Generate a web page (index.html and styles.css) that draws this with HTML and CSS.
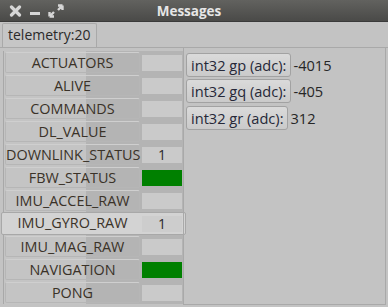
FILE: index.html
```html
<!DOCTYPE html>
<html lang="en">
<head>
  <meta charset="UTF-8">
  <title>Messages</title>
  <link rel="stylesheet" href="styles.css">
</head>
<body>
  <div class="window">
    <div class="titlebar">
      <div class="controls">
        <svg width="13" height="12" viewBox="0 0 13 12"><path d="M2.5 2 L10.5 10 M10.5 2 L2.5 10" stroke="#d6d6d6" stroke-width="3.2" stroke-linecap="round"/></svg>
        <svg width="12" height="12" viewBox="0 0 12 12"><rect x="1" y="7" width="10" height="3" fill="#d6d6d6"/></svg>
        <svg width="16" height="14" viewBox="0 0 16 14"><path d="M1.5 12.5 L6 8 M1.5 12.5 V8 M1.5 12.5 H6 M14.5 1.5 L10 6 M14.5 1.5 V6 M14.5 1.5 H10" stroke="#d6d6d6" stroke-width="2.4" fill="none"/></svg>
      </div>
      <div class="title">Messages</div>
    </div>

    <div class="tabbar">
      <div class="tab">telemetry:20</div>
    </div>

    <div class="content">
      <div class="msglist">
        <div class="row"><span class="name">ACTUATORS</span><span class="val"></span></div>
        <div class="row"><span class="name">ALIVE</span><span class="val"></span></div>
        <div class="row"><span class="name">COMMANDS</span><span class="val"></span></div>
        <div class="row"><span class="name">DL_VALUE</span><span class="val"></span></div>
        <div class="row"><span class="name">DOWNLINK_STATUS</span><span class="val">1</span></div>
        <div class="row"><span class="name">FBW_STATUS</span><span class="val green"></span></div>
        <div class="row"><span class="name">IMU_ACCEL_RAW</span><span class="val"></span></div>
        <div class="row selected"><span class="name">IMU_GYRO_RAW</span><span class="val">1</span></div>
        <div class="row"><span class="name">IMU_MAG_RAW</span><span class="val"></span></div>
        <div class="row"><span class="name">NAVIGATION</span><span class="val green"></span></div>
        <div class="row"><span class="name">PONG</span><span class="val"></span></div>
      </div>

      <div class="fields">
        <div class="field"><span class="fbtn">int32 gp (adc):</span><span class="fval">-4015</span></div>
        <div class="field"><span class="fbtn">int32 gq (adc):</span><span class="fval">-405</span></div>
        <div class="field"><span class="fbtn">int32 gr (adc):</span><span class="fval">312</span></div>
      </div>
    </div>
  </div>
</body>
</html>
```

FILE: styles.css
```css
body { margin: 0; background: #c3c3c3; font-family: "Open Sans", "DejaVu Sans", sans-serif; font-size: 13px; }
.window { width: 388px; height: 307px; display: flex; flex-direction: column; }

.titlebar { height: 21px; flex: none; display: flex; align-items: center; position: relative;
  background: linear-gradient(#62625f, #4a4a48); border-bottom: 1px solid #3a3a3a; }
.controls { display: flex; align-items: center; gap: 7px; padding-left: 9px; }
.title { position: absolute; left: 0; right: 10px; text-align: center; color: #e6e6e6; font-weight: bold; font-size: 13.5px; pointer-events: none; }

.tabbar { height: 25px; flex: none; padding-left: 2px; display: flex; align-items: flex-end; }
.tab { height: 23px; padding: 0 6px 0 5px; line-height: 22px; border: 1px solid #a9a9a9; border-bottom: none;
  border-radius: 2px 2px 0 0; background: #c6c6c6; color: #2a2a2a; font-size: 14px; }

.content { flex: 1; display: flex; border-top: 1px solid #a9a9a9; padding: 0 2px 2px 2px; }

.msglist { width: 181px; flex: none; display: flex; flex-direction: column; padding-top: 3px; }
.row { height: 23px; box-sizing: border-box; display: flex; align-items: center; margin-left: 1px; border-left: 1px solid #a8a8a8;
  background: linear-gradient(90deg, #c4c4c4 0, #c4c4c4 46%, #b4b4b4 46%, #b4b4b4 100%); }
.row .name { width: 135px; margin-left: 1px; height: 21px; line-height: 20px; text-align: center; color: #3a3228;
  border: 1px solid #b6b6b6; border-top-color: #cfcfcf; border-radius: 2px; font-size: 14.4px; box-sizing: border-box; white-space: nowrap; }
.row .val { width: 40px; height: 16px; margin-left: 2px; background: #cacaca; text-align: center; line-height: 16px; color: #2a2a2a; font-size: 14px; }
.row .val.green { background: #008000; }
.row.selected { background: #d3d3d3; margin-left: -1px; margin-right: -3px; border: 1px solid #a8a8a8; border-radius: 2px; }
.row.selected .name { border: none; margin-left: 3px; }
.row.selected .val { background: #cdcdcd; }

.fields { flex: 1; border: 1px solid #a9a9a9; border-top: none; padding: 5px 2px; display: flex; flex-direction: column; gap: 3px; }
.field { display: flex; align-items: center; height: 23.5px; }
.fbtn { height: 24px; line-height: 22px; padding: 0 4px; border: 1px solid #a2a2a2; border-radius: 3px; background: linear-gradient(#dadada, #cacaca);
  color: #262838; box-sizing: border-box; font-size: 14.6px; white-space: nowrap; }
.fval { margin-left: 2px; color: #262626; font-size: 14.6px; }
```
